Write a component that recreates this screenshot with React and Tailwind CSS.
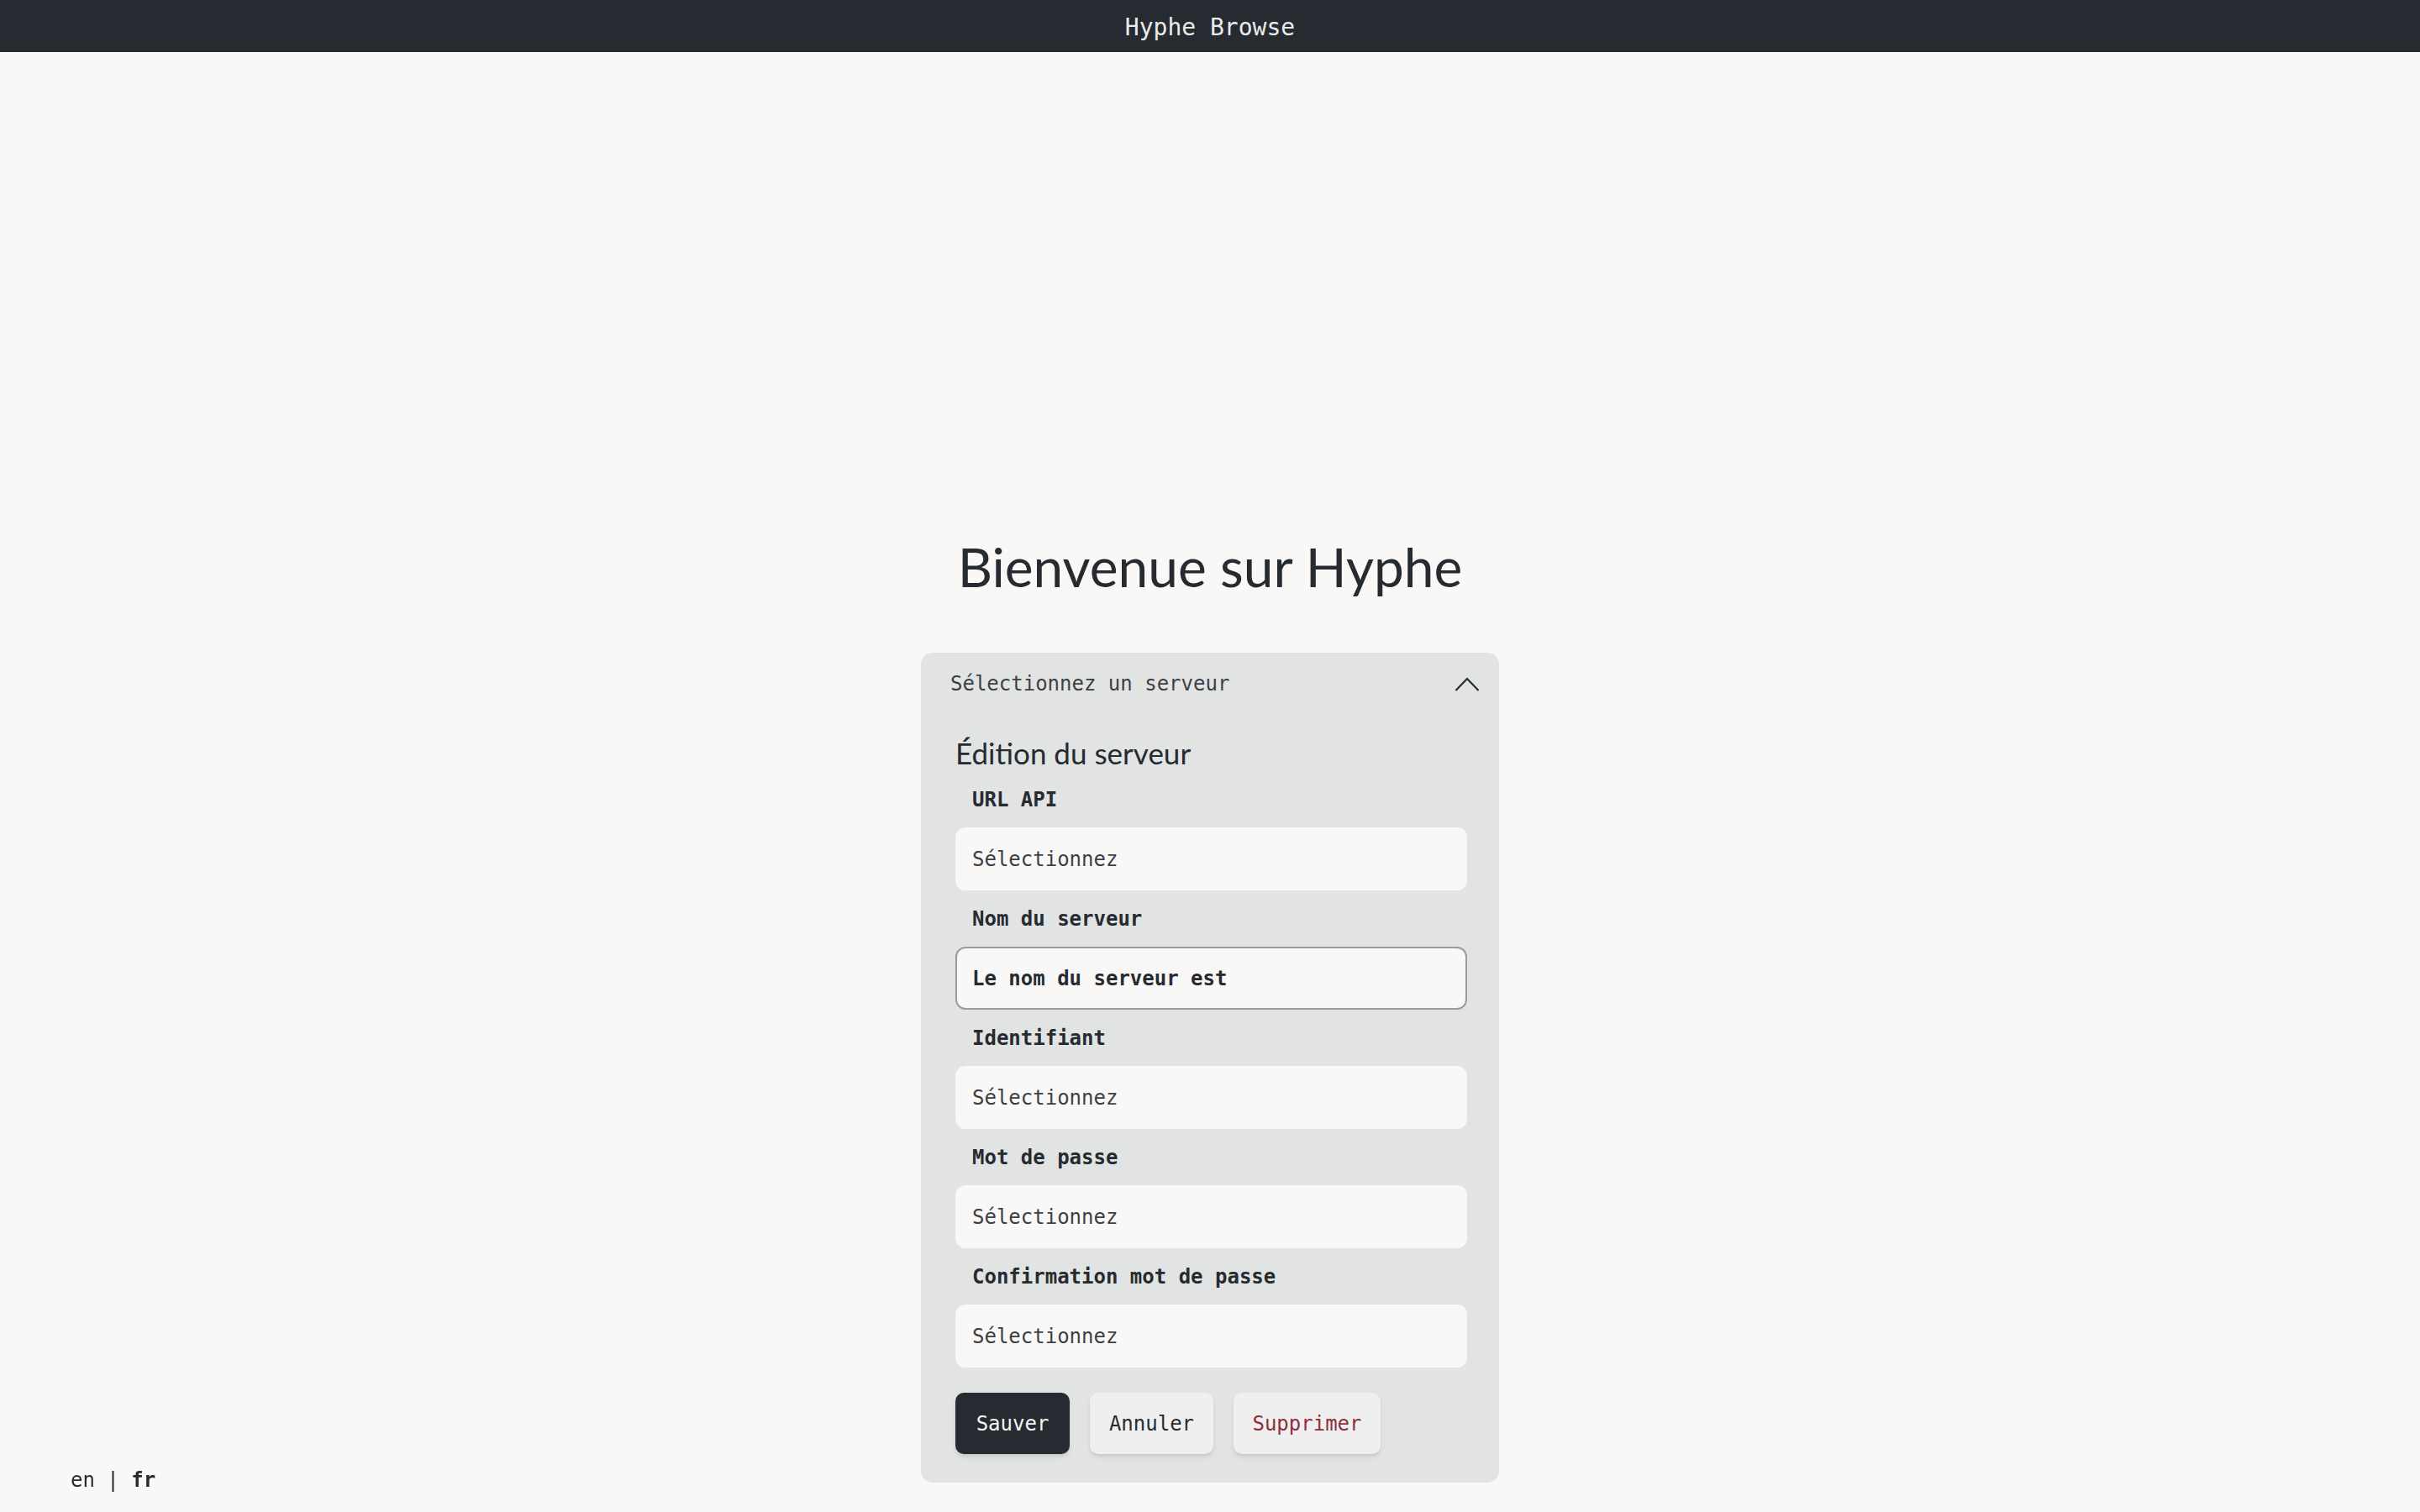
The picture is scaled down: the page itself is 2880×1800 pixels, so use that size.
import { useState } from 'react';

const MONO = "font-['DejaVu_Sans_Mono','Liberation_Mono',monospace]";
const SANS = "font-['Lato','Noto_Sans',sans-serif]";

const FIELDS = [
  { label: 'URL API', value: '', placeholder: 'Sélectionnez' },
  { label: 'Nom du serveur', value: 'Le nom du serveur est', placeholder: 'Sélectionnez', focused: true },
  { label: 'Identifiant', value: '', placeholder: 'Sélectionnez' },
  { label: 'Mot de passe', value: '', placeholder: 'Sélectionnez' },
  { label: 'Confirmation mot de passe', value: '', placeholder: 'Sélectionnez' },
];

function Field({ label, value, placeholder, focused }) {
  return (
    <div className="flex flex-col">
      <label className={`${MONO} mt-[19px] mb-[18px] pl-5 text-[24px] leading-[30px] font-bold text-[#262a31]`}>
        {label}
      </label>
      <div
        className={`h-[75px] rounded-[12px] bg-[#f9f8f6] flex items-center px-5 text-[24px] ${MONO} ${
          focused ? 'border-2 border-[#9b9b9b] font-bold text-[#262a31] px-[18px]' : 'text-[#3c3f45]'
        }`}
      >
        {value || placeholder}
      </div>
    </div>
  );
}

export default function App() {
  const [lang] = useState('fr');

  return (
    <div className="min-h-screen bg-[#f9f8f6] text-[#262a31] flex flex-col">
      <header className={`${MONO} h-[62px] pt-[3px] bg-[#262a31] text-[#ebebeb] text-[28px] flex items-center justify-center`}>
        Hyphe Browse
      </header>

      <main className="flex flex-col items-center pt-[574px]">
        <h1 className={`${SANS} text-[64px] leading-[78px] text-[#262a31]`}>Bienvenue sur Hyphe</h1>

        <div className="mt-[63px] w-[688px] rounded-[14px] bg-[#e2e4e3]">
          <div className="h-[74px] flex items-center justify-between pl-[35px] pr-[23px]">
            <span className={`${MONO} text-[24px] text-[#3c3f45]`}>Sélectionnez un serveur</span>
            <svg width="30" height="20" viewBox="0 0 30 20" fill="none" stroke="#262a31" strokeWidth="2.2">
              <polyline points="1.5,18 15,4 28.5,18" />
            </svg>
          </div>

          <div className="pl-[41px] pr-[38px] pb-[34px]">
            <h2 className={`${SANS} mt-[23px] text-[35px] leading-[44px] text-[#262a31]`}>Édition du serveur</h2>

            {FIELDS.map((f) => (
              <Field key={f.label} {...f} />
            ))}

            <div className={`${MONO} mt-[30px] flex gap-[24px] text-[24px]`}>
              <button className="h-[73px] w-[136px] rounded-[10px] bg-[#262a31] text-[#f5f5f5] shadow-md">
                Sauver
              </button>
              <button className="h-[73px] w-[147px] rounded-[10px] bg-[#efefef] text-[#262a31] shadow-md">
                Annuler
              </button>
              <button className="h-[73px] w-[175px] rounded-[10px] bg-[#efefef] text-[#8e2f3c] shadow-md">
                Supprimer
              </button>
            </div>
          </div>
        </div>
      </main>

      <div className={`${MONO} fixed left-[84px] bottom-[20px] text-[24px] text-[#262a31] whitespace-pre`}>
        <span className={lang === 'en' ? 'font-bold' : ''}>en</span>
        {' | '}
        <span className={lang === 'fr' ? 'font-bold' : ''}>fr</span>
      </div>
    </div>
  );
}
